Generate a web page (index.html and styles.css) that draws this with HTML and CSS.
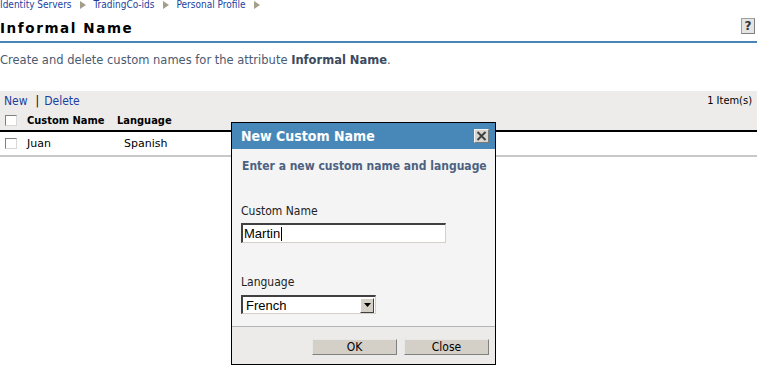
FILE: index.html
```html
<!DOCTYPE html>
<html lang="en">
<head>
  <meta charset="UTF-8" />
  <title>Informal Name</title>
  <link rel="stylesheet" href="styles.css">
</head>
<body>
  <div class="crumbs">
    <a>Identity Servers</a><span class="arr"></span>
    <a>TradingCo-ids</a><span class="arr"></span>
    <a>Personal Profile</a><span class="arr"></span>
  </div>

  <div class="head">
    <h1>Informal Name</h1>
    <span class="help">?</span>
  </div>

  <p class="desc">Create and delete custom names for the attribute <b>Informal Name</b>.</p>

  <div class="list">
    <div class="tools">
      <div><a>New</a><span class="sep">|</span><a>Delete</a></div>
      <div class="count">1 Item(s)</div>
    </div>
    <div class="row hdr">
      <span class="cb"></span>
      <span class="c-name">Custom Name</span>
      <span class="c-lang">Language</span>
    </div>
    <div class="row item">
      <span class="cb"></span>
      <span class="c-name">Juan</span>
      <span class="c-lang">Spanish</span>
    </div>
  </div>

  <div class="dialog">
    <div class="dtitle">
      <span>New Custom Name</span>
      <span class="x">
        <svg width="11" height="10" viewBox="0 0 11 10"><path d="M1.5 1 L9.5 9 M9.5 1 L1.5 9" stroke="#404040" stroke-width="2"/></svg>
      </span>
    </div>
    <div class="dbody">
      <div class="intro">Enter a new custom name and language</div>
      <label>Custom Name</label>
      <div class="field">Martin<span class="caret"></span></div>
      <label class="lang">Language</label>
      <div class="select">
        <span>French</span>
        <span class="drop"><svg width="7" height="4" viewBox="0 0 7 4"><path d="M0 0 H7 L3.5 4 Z" fill="#000"/></svg></span>
      </div>
    </div>
    <div class="dfoot">
      <button>OK</button>
      <button>Close</button>
    </div>
  </div>
</body>
</html>
```

FILE: styles.css
```css
*,*::before,*::after{box-sizing:border-box}
body{margin:0;background:#fff;font-family:'DejaVu Sans',Verdana,sans-serif;color:#000;position:relative;min-height:366px}
a{color:#1c3f9e;cursor:pointer}

.crumbs{font-family:'DejaVu Sans Condensed','DejaVu Sans',sans-serif;font-size:10px;line-height:9px;height:9px;display:flex;align-items:center;white-space:nowrap}
.crumbs a{color:#1c3f9e}
.arr{display:inline-block;width:0;height:0;border-left:6px solid #a59e8c;border-top:4px solid transparent;border-bottom:4px solid transparent;margin:0 8px 0 8px}

.head{display:flex;justify-content:space-between;align-items:flex-end;margin-top:10px;height:24px;border-bottom:2px solid #4985b8;padding-bottom:5px}
h1{margin:0;font-size:13.5px;line-height:16px;font-weight:bold;letter-spacing:1.6px}
.help{width:14px;height:16px;margin-right:2px;margin-bottom:2px;background:#e4e4e4;border:1px solid #a0a0a0;border-right-color:#808080;border-bottom-color:#808080;font-size:12px;font-weight:bold;line-height:14px;text-align:center;color:#333}

.desc{margin:10px 0 0;font-size:11.5px;line-height:15px;color:#4b5a70}
.desc b{color:#3c4a5e}

.list{margin-top:23px}
.tools{background:#edecea;display:flex;justify-content:space-between;padding:3px 5px 0 4px;height:19px;font-family:'DejaVu Sans Condensed','DejaVu Sans',sans-serif;font-size:12px;line-height:14px}
.tools .count{font-size:11px}
.tools .sep{margin:0 5px 0 8px;color:#000}
.count{color:#000}
.row{display:flex;align-items:center;height:21px;font-size:11px;font-family:'DejaVu Sans Condensed','DejaVu Sans',sans-serif}
.row.hdr{background:#edecea;border-bottom:2px solid #000;font-weight:bold;height:22px}
.row.item{border-bottom:2px solid #c8c8c8;height:25px;padding-bottom:1px;font-family:'DejaVu Sans',Verdana,sans-serif}
.cb{width:12px;height:11px;margin:0 10px 0 5px;background:#fff;border:1px solid #808080;border-right-color:#d8d8d8;border-bottom-color:#d8d8d8}
.c-name{width:90px}
.item .c-lang{margin-left:7px}

.dialog{position:absolute;left:231px;top:122px;width:265px;height:243px;border:1px solid #000;background:#f4f4f4;display:flex;flex-direction:column}
.dtitle{background:#4888b9;height:26px;display:flex;align-items:center;justify-content:space-between;padding:0 6px 0 9px;color:#fff;font-family:'DejaVu Sans Condensed','DejaVu Sans',sans-serif;font-weight:bold;font-size:14px}
.x{width:15px;height:14px;background:#d8d6d0;border:1px solid #f4f4f4;border-right-color:#7a7a7a;border-bottom-color:#7a7a7a;display:flex;align-items:center;justify-content:center;margin-top:-1px}
.dbody{flex:1;padding:10px 0 0 9px}
.intro{margin-left:1px;font-family:'DejaVu Sans Condensed','DejaVu Sans',sans-serif;font-weight:bold;font-size:12px;color:#4d6282;line-height:15px}
label{display:block;margin-top:30px;font-size:12px;line-height:15px;color:#222;font-family:'DejaVu Sans Condensed','DejaVu Sans',sans-serif}
label.lang{margin-top:32px}
.field{margin-top:4px;width:205px;height:20px;background:#fff;border:2px solid #808080;border-right:1px solid #d4d0c8;border-bottom:1px solid #d4d0c8;border-top-color:#404040;border-left-color:#404040;font-family:'Liberation Sans',Arial,sans-serif;font-size:13px;line-height:17px;padding-left:1px;display:flex;align-items:center}
.caret{display:inline-block;width:1px;height:14px;background:#000;margin-left:1px}
.select{margin-top:5px;width:135px;height:19px;background:#fff;border:2px solid #404040;border-right:1px solid #d4d0c8;border-bottom:1px solid #d4d0c8;display:flex;align-items:center;justify-content:space-between;font-family:'Liberation Sans',Arial,sans-serif;font-size:13px;padding-left:3px}
.drop{width:14px;height:15px;background:#d4d0c8;border:1px solid #fff;border-right-color:#404040;border-bottom-color:#404040;display:flex;align-items:center;justify-content:center;margin-right:1px}
.dfoot{height:38px;border-top:1px solid #b4b4b4;background:#ecebe9;display:flex;justify-content:flex-end;align-items:flex-start;gap:7px;padding:12px 6px 0 0}
.dfoot button{width:85px;height:16px;margin:0;padding:0;background:#d4d0c8;border:1px solid #e8e8e8;border-right-color:#808080;border-bottom-color:#808080;font-family:'DejaVu Sans Condensed','DejaVu Sans',sans-serif;font-size:12px;line-height:13px;color:#000}
```
